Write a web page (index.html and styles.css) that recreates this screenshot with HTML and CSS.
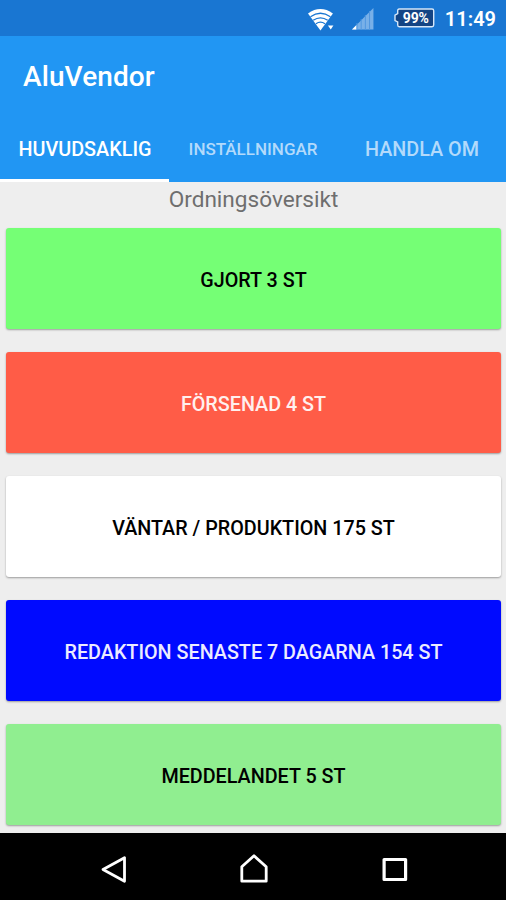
FILE: index.html
```html
<!DOCTYPE html>
<html lang="sv">
<head>
    <meta charset="UTF-8">
    <meta name="viewport" content="width=device-width, initial-scale=1.0">
    <title>AluVendor</title>
    <link rel="stylesheet" href="styles.css">
</head>
<body>
    <!-- Status bar -->
    <div class="status-bar">
        <svg class="wifi" width="28" height="24" viewBox="0 0 28 24">
            <path d="M1 5.500Q13.500 -3.500 26 5.500L13.500 22.500Z" fill="#fff"/>
            <path d="M3.500 8.700Q13.500 1.800 23.500 8.700M6.200 12.300Q13.500 7.300 20.800 12.300M9 15.700Q13.500 12.700 18 15.700" fill="none" stroke="#1976d2" stroke-width="1.300"/>
            <path d="M20 16.500H28V22H20Z" fill="#1976d2"/>
            <path d="M21 17.500H26.500L23.800 21.500Z" fill="#fff"/>
        </svg>
        <svg class="signal" width="22" height="22" viewBox="0 0 22 22">
            <path d="M0 21.500L21.500 0V21.500Z" fill="#78b0e8"/>
            <path d="M0 21.500L4.500 17V21.500Z" fill="#fff"/>
            <path d="M5 15V22M9.200 11V22M13.400 7V22M17.600 3V22" stroke="#4f97e0" stroke-width="1"/>
        </svg>
        <div class="battery">
            <svg width="41" height="20" viewBox="0 0 41 20">
                <path d="M5.200 1H38Q39.700 1 39.700 2.700V17Q39.700 18.700 38 18.700H5.200Q3.700 18.700 3.700 17V14L1 12.500V7.200L3.700 5.700V2.700Q3.700 1 5.200 1Z" fill="#134484" stroke="#d5e6f8" stroke-width="1.400"/>
            </svg>
            <span class="battery-level">99%</span>
        </div>
        <span class="clock">11:49</span>
    </div>

    <!-- App bar -->
    <div class="app-bar">
        <h1 class="title">AluVendor</h1>
        <div class="tabs">
            <div class="tab active"><span>HUVUDSAKLIG</span></div>
            <div class="tab small"><span>INSTÄLLNINGAR</span></div>
            <div class="tab"><span>HANDLA OM</span></div>
        </div>
    </div>

    <!-- Orders -->
    <div class="content">
        <h2 class="heading">Ordningsöversikt</h2>
        <div class="orders">
            <button class="order done"><span>GJORT 3 ST</span></button>
            <button class="order delayed"><span>FÖRSENAD 4 ST</span></button>
            <button class="order waiting"><span>VÄNTAR / PRODUKTION 175 ST</span></button>
            <button class="order edited"><span>REDAKTION SENASTE 7 DAGARNA 154 ST</span></button>
            <button class="order message"><span>MEDDELANDET 5 ST</span></button>
        </div>
    </div>

    <!-- Navigation bar -->
    <div class="nav-bar">
        <svg width="28" height="30" viewBox="0 0 28 30">
            <path d="M3 15.500L24.500 3.700V27.300Z" fill="none" stroke="#fff" stroke-width="2.800" stroke-linejoin="round"/>
        </svg>
        <svg width="28" height="30" viewBox="0 0 28 30">
            <path d="M1.800 27.200V12.800L14 1.800L26.200 12.800V27.200Z" fill="none" stroke="#fff" stroke-width="2.800" stroke-linejoin="round"/>
        </svg>
        <svg width="28" height="30" viewBox="0 0 28 30">
            <rect x="3.100" y="5.500" width="21.500" height="20" fill="none" stroke="#fff" stroke-width="3.200" stroke-linejoin="round"/>
        </svg>
    </div>
</body>
</html>
```
FILE: styles.css
```css
/* Reset and base styles */
* {
    margin: 0;
    padding: 0;
    box-sizing: border-box;
}

body {
    font-family: Roboto, sans-serif;
    background-color: #eee;
    display: flex;
    flex-direction: column;
    height: 900px;
    overflow: hidden;
}

/* Status bar */
.status-bar {
    display: flex;
    height: 36px;
    padding: 8px 10px 0 307px;
    background-color: #1976d2;
    color: #fff;
}

.wifi {
    margin-right: 17px;
}

.signal {
    margin-right: 20px;
}

.battery {
    position: relative;
    width: 41px;
    height: 20px;
    margin-right: 10px;
}

.battery-level {
    position: absolute;
    top: 2px;
    left: 9px;
    font-size: 14px;
    line-height: 17px;
    font-weight: 700;
    letter-spacing: -0.2px;
}

.clock {
    font-size: 20px;
    line-height: 22px;
    font-weight: 600;
    white-space: nowrap;
}

/* App bar */
.app-bar {
    display: flex;
    flex-direction: column;
    height: 146px;
    background-color: #2196f3;
}

.title {
    height: 80px;
    padding-left: 23px;
    font-size: 28px;
    line-height: 82px;
    font-weight: 500;
    letter-spacing: 0.1px;
    color: #fff;
}

.tabs {
    display: grid;
    grid-template-columns: 169px 168px 169px;
    flex: 1;
}

.tab {
    display: flex;
    justify-content: center;
    padding-top: 22px;
    padding-left: 1px;
    border-bottom: 3px solid transparent;
    font-size: 19.8px;
    line-height: 24px;
    font-weight: 500;
    color: #b3dafb;
    white-space: nowrap;
}

.tab.small {
    padding-top: 21px;
    padding-left: 0;
    font-size: 17px;
}

.tab.active {
    color: #fff;
    border-bottom-color: #fff;
}

/* Order list */
.content {
    height: 651px;
    padding: 0 5px 0 6px;
}

.heading {
    height: 46px;
    padding-top: 4px;
    font-size: 22.6px;
    line-height: 28px;
    font-weight: 400;
    text-align: center;
    color: #6e6e6e;
}

.orders {
    display: grid;
    grid-auto-rows: 101px;
    gap: 23px;
}

.order {
    padding-top: 4px;
    border: none;
    border-radius: 3px;
    box-shadow: 0 1px 2px rgba(0, 0, 0, 0.35);
    font-family: inherit;
    font-size: 19.75px;
    font-weight: 500;
    color: #000;
}

.done {
    background-color: #75ff75;
}

.delayed {
    background-color: #ff5c47;
    color: #fff0ee;
}

.waiting {
    background-color: #fff;
}

.edited {
    background-color: #000aff;
    color: #ececff;
}

.message {
    background-color: #90ee90;
}

/* Navigation bar */
.nav-bar {
    display: flex;
    justify-content: center;
    gap: 112.5px;
    flex: 1;
    padding-top: 21px;
    padding-left: 2px;
    background-color: #000;
}
```
